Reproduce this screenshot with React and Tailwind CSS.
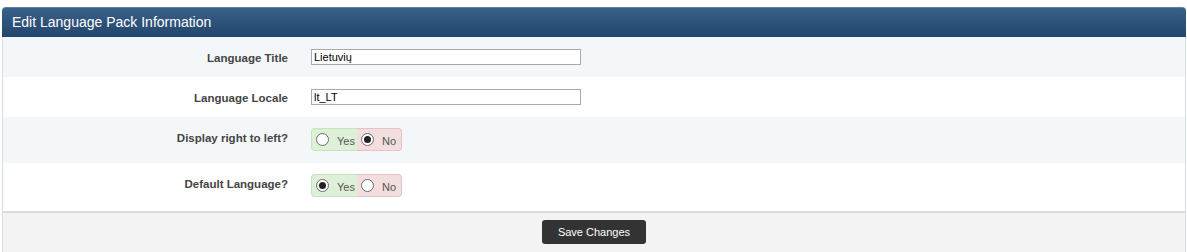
import { useState } from "react";

const rows = [
  { label: "Language Title", type: "text", value: "Lietuvių", h: "h-[40px]", bg: "bg-[#f4f7fa]" },
  { label: "Language Locale", type: "text", value: "lt_LT", h: "h-[40px]", bg: "bg-white" },
  { label: "Display right to left?", type: "yesno", value: "no", h: "h-[46px]", bg: "bg-[#f4f7fa]" },
  { label: "Default Language?", type: "yesno", value: "yes", h: "h-[48px]", bg: "bg-white" },
];

function Radio({ checked }) {
  return (
    <span className="w-[13px] h-[13px] rounded-full border border-[#6b6b6b] bg-white flex items-center justify-center shrink-0">
      {checked && <span className="w-[7px] h-[7px] rounded-full bg-[#222]" />}
    </span>
  );
}

function YesNo({ value }) {
  return (
    <div className="flex h-[23px] text-[11px] text-[#555]">
      <div className="flex items-center gap-[8px] pl-[4px] w-[46px] bg-[#dff0d8] border border-r-0 border-[#c6e4bd] rounded-l-[4px]">
        <Radio checked={value === "yes"} />
        <span className="mt-[3px]">Yes</span>
      </div>
      <div className="flex items-center gap-[8px] pl-[4px] w-[45px] bg-[#f2dede] border border-l-0 border-[#e6c3c3] rounded-r-[4px]">
        <Radio checked={value === "no"} />
        <span className="mt-[3px]">No</span>
      </div>
    </div>
  );
}

export default function App() {
  const [data] = useState(rows);
  return (
    <div className="w-[1187px] h-[252px] bg-white pt-[7px] pl-[2px] pr-[1px] font-['Liberation_Sans',Arial,sans-serif] overflow-hidden">
      <div className="border-l border-r border-[#d3e0ee] rounded-t-[4px]">
        {/* header */}
        <div className="h-[30px] -mx-px rounded-t-[4px] bg-gradient-to-b from-[#3a6189] to-[#23456c] border-t border-[#5a7fa6] flex items-center pl-[10px] text-white text-[14px]">
          Edit Language Pack Information
        </div>

        {data.map((row) => (
          <div key={row.label} className={`flex ${row.h} ${row.bg}`}>
            <div className="w-[285px] text-right font-bold text-[11.5px] text-[#444] pt-[13px]">{row.label}</div>
            <div className={`pl-[23px] ${row.type === "text" ? "pt-[12px]" : "pt-[11px]"}`}>
              {row.type === "text" ? (
                <input
                  defaultValue={row.value}
                  className="block w-[270px] h-[16px] border border-[#aaa] bg-white text-[11px] text-black px-[2px] outline-none"
                />
              ) : (
                <YesNo value={row.value} />
              )}
            </div>
          </div>
        ))}

        {/* footer */}
        <div className="h-[41px] bg-[#f3f3f3] border-t-2 border-[#dcdcdc] flex justify-center items-start pt-[7px]">
          <button className="w-[104px] h-[24px] bg-[#333] rounded-[3px] text-white text-[11px]">Save Changes</button>
        </div>
      </div>
    </div>
  );
}
